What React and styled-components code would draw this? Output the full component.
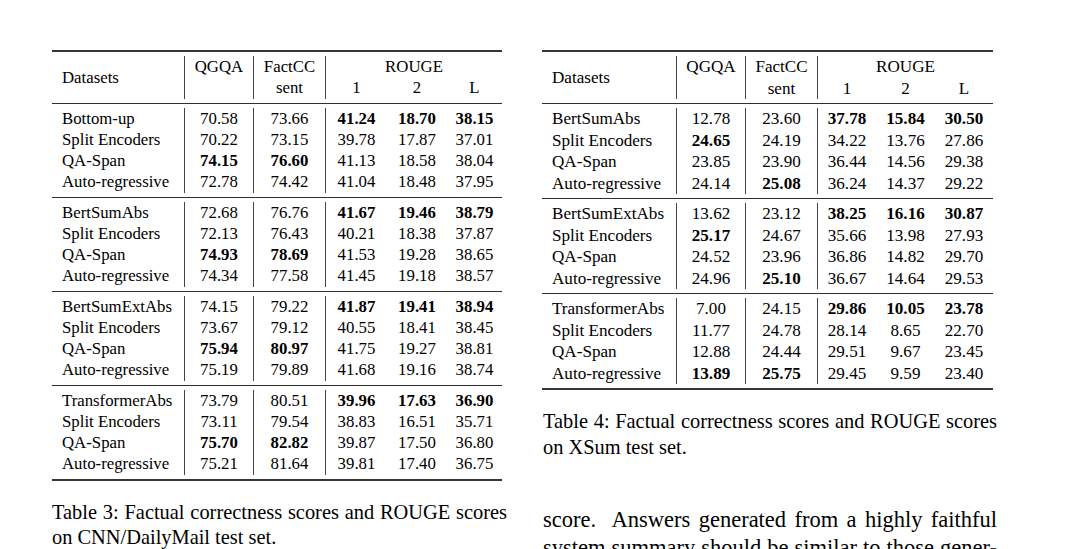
import React from "react";
import styled, { createGlobalStyle } from "styled-components";

const Global = createGlobalStyle`
  html, body { margin: 0; padding: 0; background: #fff; }
  #root { width: 1078px; height: 549px; overflow: hidden; }
`;

const Page = styled.div`
  display: flex;
  align-items: flex-start;
  gap: 36px;
  box-sizing: border-box;
  width: 1078px;
  height: 549px;
  overflow: hidden;
  padding: 50px 0 0 52px;
  font-family: "Liberation Serif", "Times New Roman", serif;
  color: #000;
`;

const Column = styled.div`
  display: flex;
  flex-direction: column;
  flex: 0 0 ${(p) => p.$w}px;
  width: ${(p) => p.$w}px;
`;

const Table = styled.div`
  width: ${(p) => p.$w}px;
  margin-left: ${(p) => p.$shift || 0}px;
  font-size: ${(p) => p.$fs}px;
  border-top: 2px solid #363636;
  border-bottom: 2px solid #363636;
`;

const Section = styled.div`
  display: grid;
  grid-template-columns: ${(p) => p.$cols};
  grid-auto-rows: ${(p) => p.$rh}px;
  line-height: ${(p) => p.$rh}px;
  padding: 4px 0;
  & + & {
    border-top: 1px solid #2e2e2e;
  }
`;

const Cell = styled.div`
  text-align: ${(p) => (p.$left ? "left" : "center")};
  padding-left: ${(p) => (p.$left ? "10px" : "0")};
  border-left: ${(p) => (p.$rule ? "1px solid #444" : "none")};
  font-weight: ${(p) => (p.$bold ? 700 : 400)};
  white-space: nowrap;
  grid-column: ${(p) => p.$col || "auto"};
  grid-row: ${(p) => p.$row || "auto"};
  align-self: ${(p) => p.$align || "stretch"};
`;

const Caption = styled.div`
  margin-top: ${(p) => p.$mt}px;
  font-size: 20.4px;
  line-height: 25.5px;
`;

const Paragraph = styled.div`
  margin-top: ${(p) => p.$mt}px;
  font-size: 22.5px;
  line-height: 27.8px;
`;

const Line = styled.span`
  display: block;
  text-align: ${(p) => (p.$justify ? "justify" : "left")};
  text-align-last: ${(p) => (p.$justify ? "justify" : "auto")};
`;

const leftGroups = [
  [
    ["Bottom-up", "70.58", "73.66", "*41.24", "*18.70", "*38.15"],
    ["Split Encoders", "70.22", "73.15", "39.78", "17.87", "37.01"],
    ["QA-Span", "*74.15", "*76.60", "41.13", "18.58", "38.04"],
    ["Auto-regressive", "72.78", "74.42", "41.04", "18.48", "37.95"],
  ],
  [
    ["BertSumAbs", "72.68", "76.76", "*41.67", "*19.46", "*38.79"],
    ["Split Encoders", "72.13", "76.43", "40.21", "18.38", "37.87"],
    ["QA-Span", "*74.93", "*78.69", "41.53", "19.28", "38.65"],
    ["Auto-regressive", "74.34", "77.58", "41.45", "19.18", "38.57"],
  ],
  [
    ["BertSumExtAbs", "74.15", "79.22", "*41.87", "*19.41", "*38.94"],
    ["Split Encoders", "73.67", "79.12", "40.55", "18.41", "38.45"],
    ["QA-Span", "*75.94", "*80.97", "41.75", "19.27", "38.81"],
    ["Auto-regressive", "75.19", "79.89", "41.68", "19.16", "38.74"],
  ],
  [
    ["TransformerAbs", "73.79", "80.51", "*39.96", "*17.63", "*36.90"],
    ["Split Encoders", "73.11", "79.54", "38.83", "16.51", "35.71"],
    ["QA-Span", "*75.70", "*82.82", "39.87", "17.50", "36.80"],
    ["Auto-regressive", "75.21", "81.64", "39.81", "17.40", "36.75"],
  ],
];

const rightGroups = [
  [
    ["BertSumAbs", "12.78", "23.60", "*37.78", "*15.84", "*30.50"],
    ["Split Encoders", "*24.65", "24.19", "34.22", "13.76", "27.86"],
    ["QA-Span", "23.85", "23.90", "36.44", "14.56", "29.38"],
    ["Auto-regressive", "24.14", "*25.08", "36.24", "14.37", "29.22"],
  ],
  [
    ["BertSumExtAbs", "13.62", "23.12", "*38.25", "*16.16", "*30.87"],
    ["Split Encoders", "*25.17", "24.67", "35.66", "13.98", "27.93"],
    ["QA-Span", "24.52", "23.96", "36.86", "14.82", "29.70"],
    ["Auto-regressive", "24.96", "*25.10", "36.67", "14.64", "29.53"],
  ],
  [
    ["TransformerAbs", "7.00", "24.15", "*29.86", "*10.05", "*23.78"],
    ["Split Encoders", "11.77", "24.78", "28.14", "8.65", "22.70"],
    ["QA-Span", "12.88", "24.44", "29.51", "9.67", "23.45"],
    ["Auto-regressive", "*13.89", "*25.75", "29.45", "9.59", "23.40"],
  ],
];

function ScoreTable({ groups, cols, rh, fs, w, shift }) {
  return (
    <Table $w={w} $fs={fs} $shift={shift}>
      <Section $cols={cols} $rh={rh}>
        <Cell $left $col="1" $row="1 / span 2" $align="center">Datasets</Cell>
        <Cell $rule $col="2" $row="1 / span 2">QGQA</Cell>
        <Cell $rule $col="3" $row="1 / span 2">
          FactCC
          <br />
          sent
        </Cell>
        <Cell $rule $col="4 / span 3" $row="1">ROUGE</Cell>
        <Cell $rule $col="4" $row="2">1</Cell>
        <Cell $col="5" $row="2">2</Cell>
        <Cell $col="6" $row="2">L</Cell>
      </Section>
      {groups.map((g, gi) => (
        <Section key={gi} $cols={cols} $rh={rh}>
          {g.map((row, ri) =>
            row.map((v, ci) => {
              const bold = v.startsWith("*");
              const text = bold ? v.slice(1) : v;
              return (
                <Cell
                  key={`${ri}-${ci}`}
                  $left={ci === 0}
                  $rule={ci >= 1 && ci <= 3}
                  $bold={bold}
                >
                  {text}
                </Cell>
              );
            })
          )}
        </Section>
      ))}
    </Table>
  );
}

export default function App() {
  return (
    <>
      <Global />
      <Page>
        <Column $w={455}>
          <ScoreTable
            groups={leftGroups}
            cols="132px 69px 72px 62px 60px 55px"
            rh={21.25}
            fs={16.8}
            w={450}
          />
          <Caption $mt={19}>
            <Line $justify>Table 3: Factual correctness scores and ROUGE scores</Line>
            <Line>on CNN/DailyMail test set.</Line>
          </Caption>
        </Column>
        <Column $w={454}>
          <ScoreTable
            groups={rightGroups}
            cols="134px 69px 72px 59px 59px 58px"
            rh={21.5}
            fs={17.1}
            w={451}
            shift={-1}
          />
          <Caption $mt={19}>
            <Line $justify>Table 4: Factual correctness scores and ROUGE scores</Line>
            <Line>on XSum test set.</Line>
          </Caption>
          <Paragraph $mt={46}>
            <Line $justify>score.&nbsp; Answers generated from a highly faithful</Line>
            <Line $justify>system summary should be similar to those gener-</Line>
          </Paragraph>
        </Column>
      </Page>
    </>
  );
}
